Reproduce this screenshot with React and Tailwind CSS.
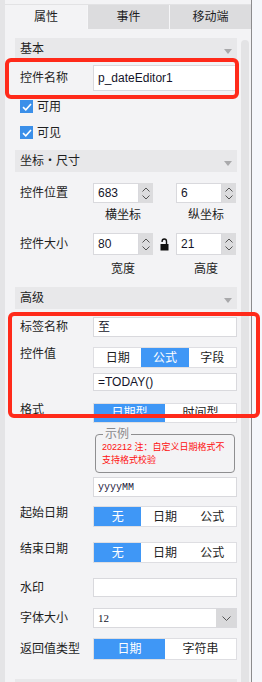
import React from 'react'

function Header({ title, className = '' }) {
  return (
    <div className={`ml-[10px] w-[222px] h-[22px] bg-[#e8e8ea] flex items-center justify-between pl-[5px] pr-[5px] text-[12px] text-[#1e1e1e] ${className}`}>
      <span>{title}</span>
      <svg width="8" height="5" viewBox="0 0 8 5" className="mt-[4px]">
        <path d="M0 0h8L4 5z" fill="#a9a9ab" />
      </svg>
    </div>
  )
}

function Row({ label, className = '', align = 'items-center', children }) {
  return (
    <div className={`flex ${align} ml-[10px] w-[222px] ${className}`}>
      <div className="w-[78px] pl-[5px] text-[12px] leading-[14px] text-[#1e1e1e] shrink-0">{label}</div>
      {children}
    </div>
  )
}

function Input({ value = '', h = 'h-[20px]', className = '' }) {
  return (
    <div className={`w-[144px] ${h} bg-white border border-[#d9d9dd] flex items-center pl-[4px] text-[12px] text-[#15152a] ${className}`}>
      {value}
    </div>
  )
}

function Seg({ items, active, h = 'h-[21px]' }) {
  return (
    <div className={`w-[144px] ${h} bg-white border border-[#dedee2] flex text-[12px]`}>
      {items.map((it, i) => (
        <div
          key={it}
          className={`flex-1 flex items-center justify-center ${i === active ? 'bg-[#3f97f6] text-white' : 'text-[#1e1e1e]'}`}
        >
          {it}
        </div>
      ))}
    </div>
  )
}

function Spin({ value, h }) {
  return (
    <div className={`flex ${h}`}>
      <div className="w-[46px] bg-white border border-[#d9d9dd] flex items-center pl-[4px] text-[12px] text-[#15152a]">
        {value}
      </div>
      <div className="w-[14px] bg-[#dcdcde] flex flex-col items-center justify-center gap-[3px]">
        <svg width="8" height="5" viewBox="0 0 8 5"><path d="M0.5 4.5L4 1l3.5 3.5" stroke="#555" fill="none" /></svg>
        <svg width="8" height="5" viewBox="0 0 8 5"><path d="M0.5 0.5L4 4l3.5-3.5" stroke="#555" fill="none" /></svg>
      </div>
    </div>
  )
}

function Check({ label, className = '' }) {
  return (
    <div className={`flex items-center ml-[15px] h-[13px] ${className}`}>
      <div className="w-[13px] h-[13px] bg-[#3b8fe9] flex items-center justify-center">
        <svg width="10" height="8" viewBox="0 0 10 8">
          <path d="M1 4.2l2.8 2.6L9 1" stroke="white" strokeWidth="1.6" fill="none" />
        </svg>
      </div>
      <span className="ml-[4px] text-[12px] text-[#1e1e1e]">{label}</span>
    </div>
  )
}

export default function App() {
  return (
    <div className="relative w-[262px] h-[682px] overflow-hidden flex bg-[#f3f3f5] font-['Liberation_Sans','Noto_Sans_CJK_SC',sans-serif]">
      {/* left strip */}
      <div className="w-[5px] bg-[#e4e4e6] shrink-0" />

      {/* main panel */}
      <div className="w-[246px] shrink-0 flex flex-col">
        <div className="h-[5px] shrink-0 bg-[#f3f3f5] border-b border-[#e2e2e4]" />
        <div className="h-[24px] shrink-0 flex text-[12px] text-[#1e1e1e]">
          <div className="w-[82px] flex items-center justify-center bg-[#f3f3f5]">属性</div>
          <div className="w-[82px] flex items-center justify-center bg-[#dcdcde] border-l border-[#f6f6f8]">事件</div>
          <div className="w-[82px] flex items-center justify-center bg-[#dcdcde] border-l border-[#f6f6f8]">移动端</div>
        </div>

        <div className="flex flex-1 min-h-0">
          <div className="w-[236px] flex flex-col [&>*]:shrink-0">
            <Header title="基本" className="mt-[9px]" />
            <Row label="控件名称" className="mt-[5px]">
              <Input value="p_dateEditor1" h="h-[26px]" />
            </Row>
            <Check label="可用" className="mt-[9px]" />
            <Check label="可见" className="mt-[13px]" />

            <Header title="坐标・尺寸" className="mt-[11px]" />
            <Row label="控件位置" className="mt-[11px]">
              <Spin value="683" h="h-[20px]" />
              <div className="w-[23px]" />
              <Spin value="6" h="h-[20px]" />
            </Row>
            <div className="flex ml-[88px] mt-[5px] text-[12px] leading-[14px] text-[#1e1e1e]">
              <div className="w-[60px] text-center">横坐标</div>
              <div className="w-[23px]" />
              <div className="w-[60px] text-center">纵坐标</div>
            </div>
            <Row label="控件大小" className="mt-[11px]">
              <Spin value="80" h="h-[22px]" />
              <div className="w-[23px] flex items-center justify-center">
                <svg width="9" height="13" viewBox="0 0 9 13">
                  <path d="M6.5 6V3.2a2.2 2.2 0 0 0-4.4 0V4" stroke="#111" strokeWidth="1.4" fill="none" />
                  <rect x="0.5" y="6" width="8" height="6.5" fill="#111" />
                </svg>
              </div>
              <Spin value="21" h="h-[22px]" />
            </Row>
            <div className="flex ml-[88px] mt-[7px] text-[12px] leading-[14px] text-[#1e1e1e]">
              <div className="w-[60px] text-center">宽度</div>
              <div className="w-[23px]" />
              <div className="w-[60px] text-center">高度</div>
            </div>

            <Header title="高级" className="mt-[11px]" />
            <Row label="标签名称" className="mt-[8px]">
              <Input value="至" />
            </Row>
            <Row label="控件值" className="mt-[10px]" align="items-start">
              <Seg items={['日期', '公式', '字段']} active={1} />
            </Row>
            <div className="ml-[88px] mt-[5px]">
              <Input value="=TODAY()" h="h-[18px]" />
            </div>
            <Row label="格式" className="mt-[12px]" align="items-start">
              <Seg items={['日期型', '时间型']} active={0} h="h-[20px]" />
            </Row>
            <fieldset className="ml-[90px] mt-[5px] w-[140px] h-[45px] border border-[#8e8e90] rounded-[4px] pl-[6px]">
              <legend className="ml-[1px] px-[2px] text-[12px] leading-[12px] text-[#8a8a8c]">示例</legend>
              <div className="text-[9px] leading-[13px] text-[#ff1010] whitespace-nowrap mt-[1px]">
                202212 注：自定义日期格式不
                <br />
                支持格式校验
              </div>
            </fieldset>
            <div className="ml-[88px] mt-[4px]">
              <Input value={<span className="font-['Liberation_Mono',monospace] text-[10px] text-[#1a1a3a]">yyyyMM</span>} />
            </div>
            <Row label="起始日期" className="mt-[9px]" align="items-start">
              <Seg items={['无', '日期', '公式']} active={0} />
            </Row>
            <Row label="结束日期" className="mt-[15px]" align="items-start">
              <Seg items={['无', '日期', '公式']} active={0} />
            </Row>
            <Row label="水印" className="mt-[15px]">
              <Input h="h-[19px]" />
            </Row>
            <Row label="字体大小" className="mt-[11px]">
              <div className="w-[144px] h-[20px] bg-white border border-[#d9d9dd] flex">
                <div className="flex-1 flex items-center pl-[4px] text-[11px] font-['Liberation_Serif',serif] text-[#15152a]">12</div>
                <div className="w-[20px] bg-[#d9d9db] flex items-center justify-center">
                  <svg width="9" height="5" viewBox="0 0 9 5"><path d="M0.5 0.5L4.5 4.5l4-4" stroke="#555" fill="none" /></svg>
                </div>
              </div>
            </Row>
            <Row label="返回值类型" className="mt-[10px]">
              <Seg items={['日期', '字符串']} active={0} h="h-[22px]" />
            </Row>
            <Header title="" className="mt-[19px]" />
          </div>
          <div className="w-[8px] mt-[11px] bg-[#e3e3e5] rounded-t-[4px]" />
          <div className="w-[2px]" />
        </div>
      </div>

      {/* divider + right strip */}
      <div className="w-[1px] bg-[#8c8c8e] shrink-0" />
      <div className="flex-1 bg-[#f5f7fb]" />

      {/* red annotation boxes */}
      <div className="absolute left-[5px] top-[58px] w-[234px] h-[41px] border-[4px] border-[#ff2a1a] rounded-[6px]" />
      <div className="absolute left-[8px] top-[312px] w-[252px] h-[106px] border-[4px] border-[#ff2a1a] rounded-[6px]" />
    </div>
  )
}
